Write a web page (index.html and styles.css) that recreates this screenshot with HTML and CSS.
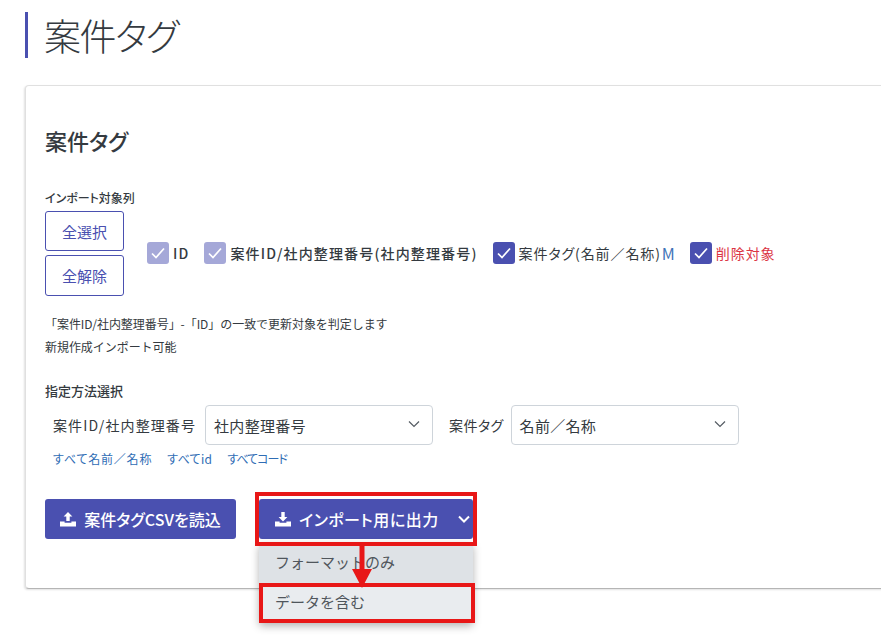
FILE: index.html
```html
<!DOCTYPE html>
<html lang="ja">
<head>
<meta charset="utf-8">
<title>案件タグ</title>
<link rel="stylesheet" href="styles.css">
</head>
<body>
<h1 class="page-title">案件タグ</h1>
<section class="card">
  <h2 class="card-title">案件タグ</h2>
  <div class="label">インポート対象列</div>
  <div class="columns">
    <div class="select-buttons">
      <button class="btn-outline">全選択</button>
      <button class="btn-outline tall">全解除</button>
    </div>
    <div class="check-row">
      <span class="check-item"><span class="box muted"><svg viewBox="0 0 22 22" class="tick"><path d="M5 11.500l4 4 8-9"/></svg></span><span class="strong">ID</span></span>
      <span class="check-item"><span class="box muted"><svg viewBox="0 0 22 22" class="tick"><path d="M5 11.500l4 4 8-9"/></svg></span><span class="strong">案件ID/社内整理番号(社内整理番号)</span></span>
      <span class="check-item"><span class="box"><svg viewBox="0 0 22 22" class="tick"><path d="M5 11.500l4 4 8-9"/></svg></span><span>案件タグ(名前／名称)</span><span class="tag-m">M</span></span>
      <span class="check-item"><span class="box"><svg viewBox="0 0 22 22" class="tick"><path d="M5 11.500l4 4 8-9"/></svg></span><span class="danger">削除対象</span></span>
    </div>
  </div>
  <p class="note">「案件ID/社内整理番号」-「ID」の一致で更新対象を判定します<br>新規作成インポート可能</p>
  <div class="label method-label">指定方法選択</div>
  <div class="method-row">
    <span class="field-label">案件ID/社内整理番号</span>
    <span class="select"><span>社内整理番号</span><svg viewBox="0 0 12 8" class="caret"><path d="M1 1.500l5 5 5-5"/></svg></span>
    <span class="field-label second">案件タグ</span>
    <span class="select select-second"><span>名前／名称</span><svg viewBox="0 0 12 8" class="caret"><path d="M1 1.500l5 5 5-5"/></svg></span>
  </div>
  <div class="links"><a class="link-wide">すべて名前／名称</a><a>すべてid</a><a class="link-tight">すべてコード</a></div>
  <div class="actions">
    <button class="btn-primary">
      <svg viewBox="0 0 16 16" class="io-icon"><path d="M8 1L3.600 5.600h2.700V10h3.400V5.600h2.700z"/><path d="M0 10.500h4.600v1.300h6.800v-1.300H16V15.500H0z"/></svg>
      案件タグCSVを読込
    </button>
    <div class="split">
      <button class="btn-primary split-main">
        <svg viewBox="0 0 16 16" class="io-icon"><path d="M6.300 1h3.400v5h2.700L8 10.500 3.600 6h2.700z"/><path d="M0 10.500h4.600v1.300h6.800v-1.300H16V15.500H0z"/></svg>
        インポート用に出力
      </button>
      <button class="btn-primary split-caret"><svg viewBox="0 0 12 8" class="caret white"><path d="M1 1.500l5 5 5-5"/></svg></button>
      <div class="menu">
        <div class="menu-item first">フォーマットのみ</div>
        <div class="menu-item">データを含む</div>
      </div>
      <div class="mark mark-top"></div>
      <div class="mark mark-bottom"></div>
      <svg class="arrow" viewBox="0 0 20 43"><path d="M7.500 0h5v24H20L10 43 0 24h7.500z"/></svg>
    </div>
  </div>
</section>
</body>
</html>
```
FILE: styles.css
```css
* { box-sizing: border-box; }
html, body { margin: 0; height: 100%; }
body {
  width: 881px;
  height: 640px;
  overflow: hidden;
  background: #fff;
  color: #343a40;
  font-family: "Noto Sans CJK JP", "Noto Sans", sans-serif;
  font-feature-settings: "palt";
  font-size: 14px;
  padding: 12px 0 0 25px;
}
button { font-family: inherit; font-feature-settings: inherit; cursor: pointer; }
.page-title {
  margin: 0;
  height: 46px;
  border-left: 3px solid #4a50b0;
  padding-left: 16px;
  font-size: 37px;
  letter-spacing: -1.500px;
  line-height: 46px;
  font-weight: 300;
  color: #343a40;
}
.card {
  margin-top: 27px;
  width: 900px;
  height: 504px;
  border: 1px solid #e0e0e0;
  border-bottom-color: #b5b5b5;
  border-radius: 4px 0 0 4px;
  box-shadow: -1px 1px 2px rgba(0,0,0,.12);
  padding: 39px 0 0 19px;
  background: #fff;
}
.card-title {
  margin: 0;
  font-size: 22px;
  line-height: 30px;
  font-weight: 500;
  color: #343a40;
}
.label {
  margin-top: 34px;
  font-size: 12px;
  line-height: 18px;
  font-weight: 500;
  color: #343a40;
}
.columns { display: flex; align-items: center; margin-top: 4px; }
.select-buttons { display: flex; flex-direction: column; gap: 4px; width: 79px; }
.btn-outline {
  height: 40px;
  width: 79px;
  border: 1px solid #4a50b0;
  border-radius: 3px;
  background: #fff;
  color: #4a50b0;
  font-size: 15px;
  padding: 0;
}
.btn-outline.tall { height: 41px; }
.check-row { display: flex; align-items: center; margin-left: 23px; gap: 15px; margin-top: -1px; }
.check-item { display: inline-flex; align-items: center; gap: 4px; font-size: 14px; letter-spacing: .9px; white-space: nowrap; }
.box { width: 22px; height: 22px; border-radius: 3px; background: #4a50b0; display: block; }
.box.muted { background: #a5a8d8; }
.tick { display: block; width: 22px; height: 22px; fill: none; stroke: #fff; stroke-width: 1.700; }
.strong { font-weight: 500; letter-spacing: 1.150px; }
.tag-m { color: #3f73b8; margin-left: -3px; letter-spacing: 0; font-size: 16px; }
.danger { color: #dc3545; }
.note { margin: 16px 0 0; font-size: 12px; line-height: 23px; color: #343a40; font-feature-settings: normal; letter-spacing: -.05px; }
.label.method-label { margin-top: 24px; font-size: 13px; }
.method-row { display: flex; align-items: center; margin-top: 5px; padding-left: 8px; font-size: 14px; letter-spacing: 1.100px; }
.field-label { white-space: nowrap; }
.field-label.second { margin-left: 16px; letter-spacing: .4px; }
.select {
  width: 228px;
  height: 40px;
  margin-left: 9px;
  border: 1px solid #ced4da;
  border-radius: 4px;
  display: flex;
  align-items: center;
  justify-content: space-between;
  padding: 0 12px 0 8px;
  font-size: 15px;
  letter-spacing: .3px;
  color: #343a40;
}
.select.select-second { margin-left: 7px; }
.caret { width: 12px; height: 8px; fill: none; stroke: #555c63; stroke-width: 1.200; margin-top: -3px; }
.caret.white { stroke: #fff; stroke-width: 2; margin: 0; }
.links { display: flex; gap: 15px; margin-top: 5px; padding-left: 8px; font-size: 12px; line-height: 18px; letter-spacing: .3px; color: #2f6db5; }
.link-wide { letter-spacing: .8px; }
.link-tight { letter-spacing: -1px; }
.actions { display: flex; align-items: flex-start; margin-top: 31px; gap: 23px; }
.btn-primary {
  height: 40px;
  border: 0;
  background: #4a50b0;
  color: #fff;
  font-size: 16px;
  font-weight: 500;
  border-radius: 3px;
  display: flex;
  align-items: center;
  padding: 0;
}
.actions > .btn-primary { width: 191px; justify-content: center; gap: 8px; }
.io-icon { width: 16px; height: 16px; fill: #fff; }
.split { position: relative; display: flex; width: 214px; }
.split-main { width: 192px; padding-left: 16px; gap: 8px; letter-spacing: .5px; border-radius: 3px 0 0 3px; }
.split-caret { width: 22px; padding-left: 3px; justify-content: center; border-radius: 0 3px 3px 0; }
.menu {
  position: absolute;
  top: 44px;
  left: 0;
  width: 214px;
  background: #e9ecef;
  border-radius: 0 0 3px 3px;
  box-shadow: 0 3px 8px rgba(0,0,0,.3);
  z-index: 2;
  font-feature-settings: normal;
}
.menu-item { height: 40px; line-height: 38px; padding-left: 16px; font-size: 15px; color: #50565c; }
.menu-item.first { background: #dee2e6; }
.mark { position: absolute; border: 4px solid #e81717; z-index: 3; }
.mark-top { top: -7px; left: -4px; width: 222px; height: 54px; }
.mark-bottom { top: 84px; left: 0; width: 216px; height: 40px; }
.arrow { position: absolute; top: 46px; left: 93px; width: 20px; height: 43px; fill: #e81717; z-index: 3; }
```
